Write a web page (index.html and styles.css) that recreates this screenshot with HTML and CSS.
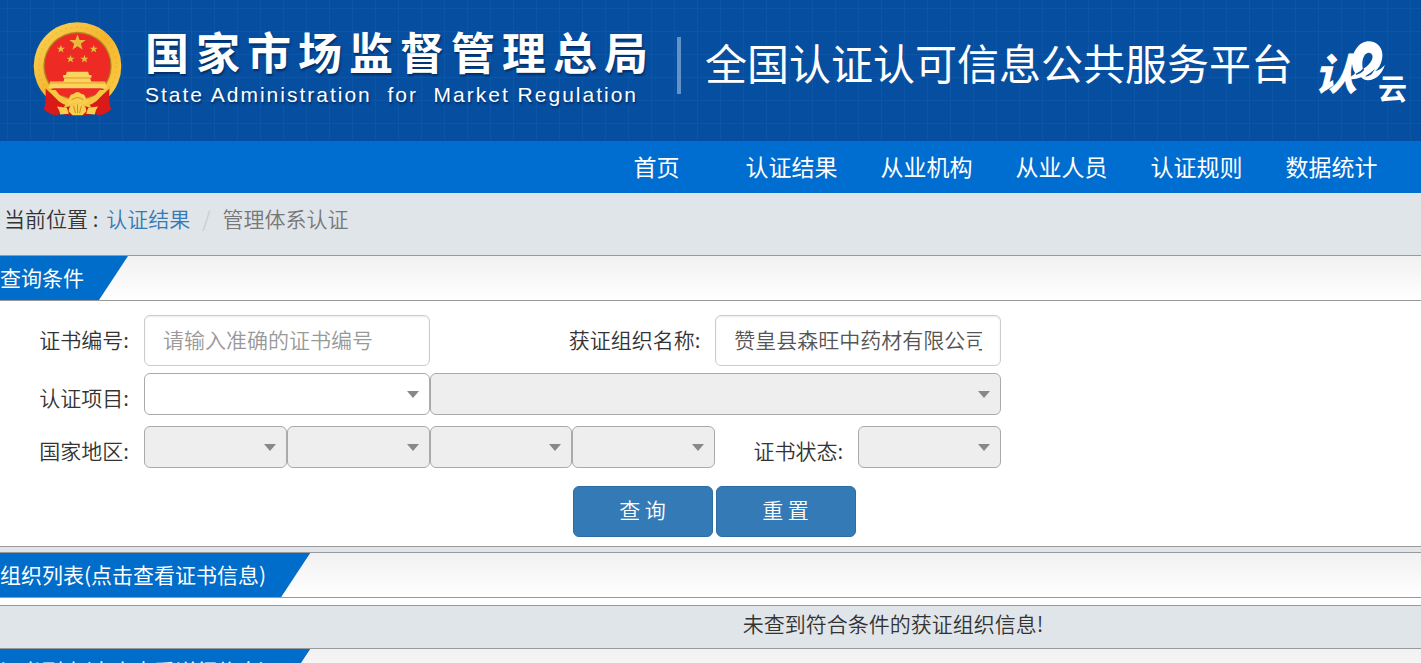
FILE: index.html
```html
<!DOCTYPE html>
<html lang="zh-CN">
<head>
<meta charset="utf-8">
<title>全国认证认可信息公共服务平台</title>
<link rel="stylesheet" href="styles.css">
</head>
<body>
<header class="banner">
  <svg class="emblem" viewBox="38 20 268 286" aria-hidden="true">
    <defs>
      <linearGradient id="gold" x1="0" y1="0" x2="1" y2="1">
        <stop offset="0" stop-color="#fbd45a"/><stop offset=".5" stop-color="#f3b62c"/><stop offset="1" stop-color="#fbd04a"/>
      </linearGradient>
      <path id="star" d="M0-10 2.4-3.2 9.5-3.1 3.9 1.2 5.9 8.1 0 4-5.9 8.1-3.9 1.2-9.5-3.1-2.4-3.2Z"/>
    </defs>
    <circle cx="172" cy="154" r="132" fill="url(#gold)"/>
    <circle cx="172" cy="154" r="117" fill="none" stroke="#e5a526" stroke-width="5" stroke-dasharray="7 9" opacity=".35"/>
    <circle cx="172" cy="154" r="103" fill="#b5851f"/>
    <circle cx="172" cy="154" r="99" fill="#ee2a24"/>
    <g fill="#e9b83c">
      <use href="#star" transform="translate(172 84) scale(2.6)"/>
      <use href="#star" transform="translate(122 103) scale(1.3)"/>
      <use href="#star" transform="translate(221 103) scale(1.3)"/>
      <use href="#star" transform="translate(151 133) scale(1.3)"/>
      <use href="#star" transform="translate(193 133) scale(1.3)"/>
    </g>
    <path fill="#fbd460" d="M140 171h64l3 10h7v8h-4l3 12h42l6 20H84l6-20h40l3-12h-4v-8h8z"/>
    <path stroke="#e39a22" stroke-width="3" d="M134 190h76M90 205h164"/>
    <path fill="#ee2a24" d="M92 223h160l-18 20H110z"/>
    <path fill="#d91a18" d="M76 222q26 28 62 46l-26 35-20-4-22-14q8-14 6-63zM268 222q-26 28-62 46l26 35 20-4 22-14q-8-14-6-63z"/>
    <path fill="#f7c443" d="M88 226q22 40 60 50l10-12q-36-12-52-38zM256 226q-22 40-60 50l-10-12q36-12 52-38z"/>
    <path fill="#c51614" d="M120 284q52-22 104 0l8 12q-60 14-120 0z"/>
    <path fill="#f9cd4e" d="M146 256q2-18 14-18 12-12 24 0 12 0 14 18l10 2-14 12q-22-10-44 0l-14-12zM110 276l30 4 6 18-26 2q-2-14-10-24zM234 276l-30 4-6 18 26 2q2-14 10-24zM145 290q2-24 27-24t27 24l-12 12h-30z"/>
    <path fill="none" stroke="#d28d20" stroke-width="3" d="M154 256q18-14 36 0M160 274l6 22M172 270v26M184 274l-6 22"/>
  </svg>
  <div class="agency">
    <strong class="agency-cn">国家市场监督管理总局</strong>
    <span class="agency-en">State Administration &nbsp;for &nbsp;Market Regulation</span>
  </div>
  <h1 class="platform">全国认证认可信息公共服务平台</h1>
  <svg class="cloud-logo" viewBox="0 0 92 72" role="img" aria-label="认e云">
    <text class="logo-brush" x="-1" y="53">认</text>
    <text class="logo-cloud" x="63" y="63">云</text>
    <g transform="translate(-46.5 -16) scale(.3333)">
      <path fill="#fff" fill-rule="evenodd" d="M260 157C246 134 248 104 263 83 277 63 297 57 315 63 338 71 346 95 340 117 337 131 330 143 320 151 332 148 341 141 349 132 341 160 322 177 298 178 290 178 283 175 278 169 262 175 250 176 236 173 244 169 253 164 260 157ZM283 144C301 134 314 117 312 104 309 93 295 92 288 103 281 114 280 130 283 144Z"/>
      <path fill="#064ea0" d="M262 158Q276 153 285 142L287 147Q279 157 262 162ZM290 166Q306 156 320 144L309 160Q299 168 290 166Z"/>
    </g>
  </svg>
</header>

<nav class="nav" aria-label="主导航">
  <a href="#">首页</a>
  <a href="#">认证结果</a>
  <a href="#">从业机构</a>
  <a href="#">从业人员</a>
  <a href="#">认证规则</a>
  <a href="#">数据统计</a>
</nav>

<main>
  <div class="crumbs">
    <span>当前位置 :</span>
    <a href="#">认证结果</a>
    <span class="slash">/</span>
    <span class="current">管理体系认证</span>
  </div>

  <section>
    <div class="bar"><h2 class="tab">查询条件</h2></div>
    <form class="query">
      <div class="row">
        <label for="cert-no">证书编号:</label>
        <input class="span2" id="cert-no" type="text" placeholder="请输入准确的证书编号">
        <label class="span2" for="org">获证组织名称:</label>
        <input class="span2" id="org" type="text" value="赞皇县森旺中药材有限公司">
      </div>
      <div class="row selects">
        <label for="project">认证项目:</label>
        <span class="pick span2"><select id="project"><option></option></select></span>
        <span class="pick span4"><select aria-label="认证项目细分" disabled><option></option></select></span>
      </div>
      <div class="row selects">
        <label for="country">国家地区:</label>
        <span class="pick"><select id="country" disabled><option></option></select></span>
        <span class="pick"><select aria-label="省" disabled><option></option></select></span>
        <span class="pick"><select aria-label="市" disabled><option></option></select></span>
        <span class="pick"><select aria-label="区县" disabled><option></option></select></span>
        <label for="status">证书状态:</label>
        <span class="pick"><select id="status" disabled><option></option></select></span>
      </div>
      <div class="row actions">
        <div class="buttons">
          <button type="button">查 询</button>
          <button type="button">重 置</button>
        </div>
      </div>
    </form>
  </section>

  <section class="results">
    <div class="bar"><h2 class="tab">组织列表(点击查看证书信息)</h2></div>
    <p class="empty">未查到符合条件的获证组织信息!</p>
  </section>

  <section>
    <div class="bar"><h2 class="tab">证书列表(点击查看详细信息)</h2></div>
  </section>
</main>
</body>
</html>
```
FILE: styles.css
```css
* { box-sizing: border-box; }

html { overflow: hidden; height: 100%; }

body {
  margin: 0;
  height: 100%;
  overflow: hidden;
  background: #fff;
  color: #333;
  font: 350 21px/30px "Noto Sans CJK SC", sans-serif;
}

a { text-decoration: none; }

.banner {
  display: flex;
  align-items: flex-start;
  padding: 21px 14px 20px 33px;
  white-space: nowrap;
  color: #fff;
  background:
    repeating-linear-gradient(90deg, transparent 0 7px, #0c55a7 7px 8px, transparent 8px 23px),
    repeating-linear-gradient(180deg, transparent 0 8px, #0c55a7 8px 9px, transparent 9px 23px),
    #064ea0;
}

.emblem { flex: none; width: 89px; height: 96px; margin-bottom: 4px; }

.agency {
  display: flex;
  flex-direction: column;
  flex: none;
  width: 532px;
  margin-left: 23px;
  text-shadow: 1px 2px 2px #032f66;
}

.agency-cn {
  font-size: 44px;
  font-weight: 700;
  line-height: 60px;
  letter-spacing: 7px;
}

.agency-en {
  font: 21px/28px "Liberation Sans", sans-serif;
  letter-spacing: 2px;
}

.platform {
  margin: 16px 0 0;
  padding: 0 0 8px 24px;
  border-left: 4px solid #6393c8;
  font-size: 42px;
  font-weight: 400;
  line-height: 49px;
}

.cloud-logo { flex: none; width: 92px; height: 72px; margin: 16px 0 0 auto; }
.logo-brush { font: italic 900 43px "Noto Sans CJK SC", sans-serif; fill: #fff; }
.logo-cloud { font: 700 29px "Noto Sans CJK SC", sans-serif; fill: #fff; }

.nav {
  display: flex;
  justify-content: flex-end;
  padding: 0 22px 2px 0;
  background: #006dd0;
}

.nav a {
  width: 135px;
  color: #fff;
  font-size: 23px;
  font-weight: 400;
  line-height: 50px;
  text-align: center;
}

.crumbs {
  display: flex;
  padding: 10px 4px 22px;
  background: #e0e5e9;
}

.crumbs a { margin-left: 8px; color: #337ab7; }
.slash { margin: 0 12px; color: #ccc; }
.current { color: #777; }

.bar {
  border: 1px solid #999;
  border-width: 1px 0;
  background: linear-gradient(#f1f1f1, #fff);
}

.tab {
  width: fit-content;
  margin: 0;
  padding: 0 44px 2px 0;
  background: #006dca;
  clip-path: polygon(0 0, 100% 0, calc(100% - 29px) 100%, 0 100%);
  color: #fff;
  font-size: 21px;
  font-weight: 400;
  line-height: 42px;
}

.query { padding: 14px 0 9px; }

.row {
  display: grid;
  grid-template-columns: 144px repeat(6, 1fr);
  max-width: 1001px;
  margin-bottom: 7px;
}

.row label { padding: 9px 15px 0 0; text-align: right; white-space: nowrap; }
.span2, .row .span2 { grid-column: span 2; }
.span4 { grid-column: span 4; }
.selects { margin-bottom: 11px; }

input {
  width: 100%;
  min-width: 0;
  height: 51px;
  padding: 0 18px 4px;
  border: 1px solid #ccc;
  border-radius: 6px;
  background: #fff;
  box-shadow: inset 0 1px 2px #00000013;
  color: #555;
  font: inherit;
}

input::placeholder { color: #999; }

.pick { position: relative; height: 42px; }

.pick::after {
  content: "";
  position: absolute;
  top: 18px;
  right: 11px;
  border: 6px solid transparent;
  border-width: 7px 6px 0;
  border-top-color: #888;
  pointer-events: none;
}

select {
  display: block;
  width: 100%;
  height: 100%;
  appearance: none;
  border: 1px solid #aaa;
  border-radius: 6px;
  background: #fff;
  font: inherit;
}

select:disabled { background: #eee; opacity: 1; }

.actions { margin: 18px 0 0; }
.buttons { display: flex; gap: 3px; grid-column: 5 / -1; }

button {
  width: 140px;
  height: 51px;
  padding: 0 0 5px;
  border: 1px solid #2e6da4;
  border-radius: 6px;
  background: #337ab7;
  color: #fff;
  font: inherit;
}

.results { border-top: 1px solid #999; padding-top: 5px; background: #e0e5e9; }

.empty {
  margin: 0;
  padding: 2px 0 10px 365px;
  border-top: 1px solid #999;
  text-align: center;
  box-shadow: 0 -7px #fff;
}

.results .bar { margin-bottom: 7px; }
```
